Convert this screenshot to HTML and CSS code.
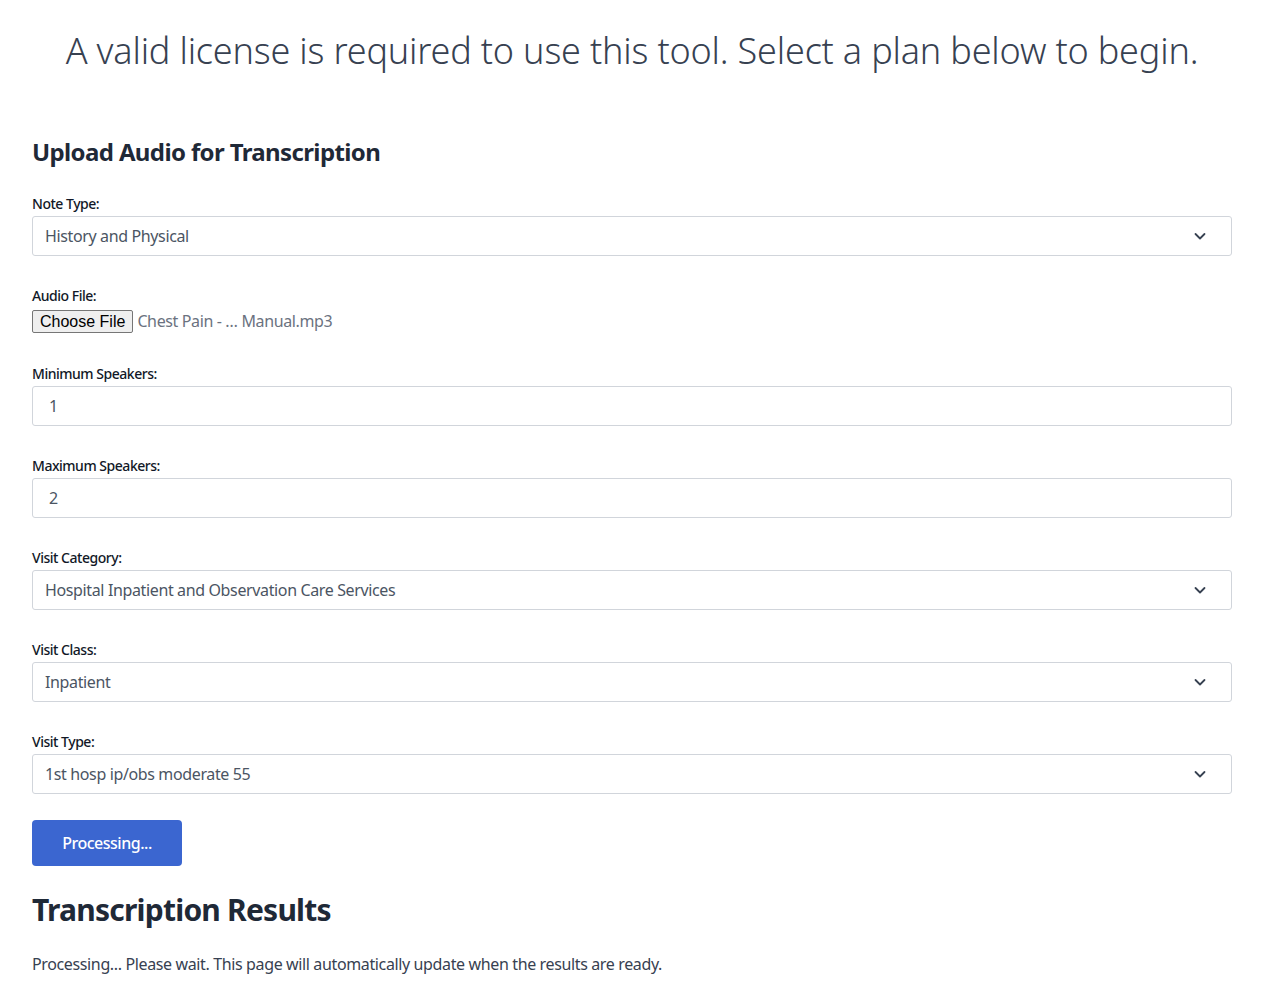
FILE: index.html
```html
<!DOCTYPE html>
<html lang="en">
<head>
<meta charset="utf-8">
<title>Upload Audio for Transcription</title>
<link rel="stylesheet" href="styles.css">
</head>
<body>
<main class="container">
  <h1 class="license">A valid license is required to use this tool. Select a plan below to begin.</h1>

  <section class="upload">
    <h2 class="section-title">Upload Audio for Transcription</h2>
    <form class="form">
      <div class="field">
        <label class="label">Note Type:</label>
        <div class="select">
          <span class="select-value">History and Physical</span>
          <svg class="chevron" viewBox="0 0 16 16" width="16" height="16"><path d="M3.5 6l4.5 4.5L12.5 6" fill="none" stroke="#374151" stroke-width="1.8" stroke-linecap="round" stroke-linejoin="round"/></svg>
        </div>
      </div>

      <div class="field">
        <label class="label">Audio File:</label>
        <div class="file">
          <span class="file-btn">Choose File</span>
          <span class="file-name">Chest Pain - … Manual.mp3</span>
        </div>
      </div>

      <div class="field">
        <label class="label">Minimum Speakers:</label>
        <div class="input">1</div>
      </div>

      <div class="field">
        <label class="label">Maximum Speakers:</label>
        <div class="input">2</div>
      </div>

      <div class="field">
        <label class="label">Visit Category:</label>
        <div class="select">
          <span class="select-value">Hospital Inpatient and Observation Care Services</span>
          <svg class="chevron" viewBox="0 0 16 16" width="16" height="16"><path d="M3.5 6l4.5 4.5L12.5 6" fill="none" stroke="#374151" stroke-width="1.8" stroke-linecap="round" stroke-linejoin="round"/></svg>
        </div>
      </div>

      <div class="field">
        <label class="label">Visit Class:</label>
        <div class="select">
          <span class="select-value">Inpatient</span>
          <svg class="chevron" viewBox="0 0 16 16" width="16" height="16"><path d="M3.5 6l4.5 4.5L12.5 6" fill="none" stroke="#374151" stroke-width="1.8" stroke-linecap="round" stroke-linejoin="round"/></svg>
        </div>
      </div>

      <div class="field field-last">
        <label class="label">Visit Type:</label>
        <div class="select">
          <span class="select-value">1st hosp ip/obs moderate 55</span>
          <svg class="chevron" viewBox="0 0 16 16" width="16" height="16"><path d="M3.5 6l4.5 4.5L12.5 6" fill="none" stroke="#374151" stroke-width="1.8" stroke-linecap="round" stroke-linejoin="round"/></svg>
        </div>
      </div>

      <button type="button" class="btn">Processing...</button>
    </form>
  </section>

  <section class="results">
    <h2 class="results-title">Transcription Results</h2>
    <p class="results-text">Processing... Please wait. This page will automatically update when the results are ready.</p>
  </section>
</main>
</body>
</html>
```

FILE: styles.css
```css
* { box-sizing: border-box; }

body {
  margin: 0;
  background: #ffffff;
  font-family: "Noto Sans", "Open Sans", sans-serif;
  color: #1f2937;
  letter-spacing: -0.023em;
}

.container {
  width: 1200px;
  margin-left: 32px;
  padding-top: 26px;
}

.license {
  margin: 0;
  text-align: center;
  font-size: 36px;
  line-height: 50px;
  font-weight: 300;
  letter-spacing: -0.005em;
  color: #374151;
}

.upload {
  margin-top: 60px;
}

.section-title {
  margin: 0 0 26px;
  font-size: 24px;
  line-height: 32px;
  font-weight: 700;
  letter-spacing: -0.026em;
  color: #1f2937;
}

.form {
  display: flex;
  flex-direction: column;
}

.field {
  margin-bottom: 30px;
}

.field-last {
  margin-bottom: 26px;
}

.label {
  display: block;
  font-size: 14px;
  line-height: 20px;
  font-weight: 500;
  letter-spacing: -0.034em;
  color: #111827;
  margin-bottom: 2px;
}

.select,
.input {
  height: 40px;
  border: 1px solid #d1d5db;
  border-radius: 3px;
  display: flex;
  align-items: center;
  font-size: 16px;
  color: #4b5563;
}

.select {
  padding: 0 23px 0 12px;
  justify-content: space-between;
}

.input {
  padding: 0 16px;
}

.chevron { display: block; }

.file {
  display: flex;
  align-items: center;
  height: 26px;
}

.file-btn {
  font-family: "Liberation Sans", Arial, sans-serif;
  font-size: 16px;
  letter-spacing: 0;
  color: #000;
  background: #efefef;
  border: 1px solid #767676;
  border-radius: 2px;
  padding: 1px 7px;
  line-height: 19px;
}

.file-name {
  margin-left: 4px;
  font-size: 16px;
  color: #6b7280;
}

.btn {
  align-self: flex-start;
  width: 150px;
  height: 46px;
  border: none;
  border-radius: 4px;
  background: #3b66d0;
  color: #ffffff;
  font-family: inherit;
  font-size: 16px;
  font-weight: 500;
  letter-spacing: -0.03em;
}

.results-title {
  margin: 24px 0 0;
  font-size: 30px;
  line-height: 40px;
  font-weight: 700;
  letter-spacing: -0.026em;
  color: #1f2937;
}

.results-text {
  margin: 22px 0 0;
  font-size: 16px;
  line-height: 24px;
  color: #374151;
}
```
